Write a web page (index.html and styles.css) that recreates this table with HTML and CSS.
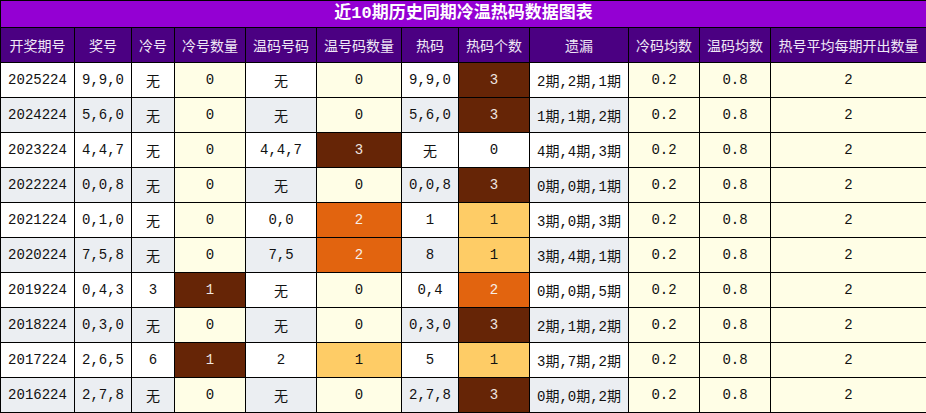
FILE: index.html
```html
<!DOCTYPE html>
<html lang="zh-CN">
<head>
<meta charset="utf-8">
<title>近10期历史同期冷温热码数据图表</title>
<link rel="stylesheet" href="styles.css">
</head>
<body>
<table class="chart">
  <colgroup>
    <col class="c1"><col class="c2"><col class="c3"><col class="c4"><col class="c5"><col class="c6">
    <col class="c7"><col class="c8"><col class="c9"><col class="c10"><col class="c11"><col class="c12">
  </colgroup>
  <thead>
    <tr><th colspan="12" class="title">近10期历史同期冷温热码数据图表</th></tr>
    <tr class="head">
      <th>开奖期号</th><th>奖号</th><th>冷号</th><th>冷号数量</th><th>温码号码</th><th>温号码数量</th>
      <th>热码</th><th>热码个数</th><th>遗漏</th><th>冷码均数</th><th>温码均数</th><th>热号平均每期开出数量</th>
    </tr>
  </thead>
  <tbody>
    <tr><td>2025224</td><td>9,9,0</td><td>无</td><td class="cr">0</td><td>无</td><td class="cr">0</td><td>9,9,0</td><td class="br">3</td><td>2期,2期,1期</td><td class="cr">0.2</td><td class="cr">0.8</td><td class="cr">2</td></tr>
    <tr class="alt"><td>2024224</td><td>5,6,0</td><td>无</td><td class="cr">0</td><td>无</td><td class="cr">0</td><td>5,6,0</td><td class="br">3</td><td>1期,1期,2期</td><td class="cr">0.2</td><td class="cr">0.8</td><td class="cr">2</td></tr>
    <tr><td>2023224</td><td>4,4,7</td><td>无</td><td class="cr">0</td><td>4,4,7</td><td class="br">3</td><td>无</td><td>0</td><td>4期,4期,3期</td><td class="cr">0.2</td><td class="cr">0.8</td><td class="cr">2</td></tr>
    <tr class="alt"><td>2022224</td><td>0,0,8</td><td>无</td><td class="cr">0</td><td>无</td><td class="cr">0</td><td>0,0,8</td><td class="br">3</td><td>0期,0期,1期</td><td class="cr">0.2</td><td class="cr">0.8</td><td class="cr">2</td></tr>
    <tr><td>2021224</td><td>0,1,0</td><td>无</td><td class="cr">0</td><td>0,0</td><td class="or">2</td><td>1</td><td class="lo">1</td><td>3期,0期,3期</td><td class="cr">0.2</td><td class="cr">0.8</td><td class="cr">2</td></tr>
    <tr class="alt"><td>2020224</td><td>7,5,8</td><td>无</td><td class="cr">0</td><td>7,5</td><td class="or">2</td><td>8</td><td class="lo">1</td><td>3期,4期,1期</td><td class="cr">0.2</td><td class="cr">0.8</td><td class="cr">2</td></tr>
    <tr><td>2019224</td><td>0,4,3</td><td>3</td><td class="br">1</td><td>无</td><td class="cr">0</td><td>0,4</td><td class="or">2</td><td>0期,0期,5期</td><td class="cr">0.2</td><td class="cr">0.8</td><td class="cr">2</td></tr>
    <tr class="alt"><td>2018224</td><td>0,3,0</td><td>无</td><td class="cr">0</td><td>无</td><td class="cr">0</td><td>0,3,0</td><td class="br">3</td><td>2期,1期,2期</td><td class="cr">0.2</td><td class="cr">0.8</td><td class="cr">2</td></tr>
    <tr><td>2017224</td><td>2,6,5</td><td>6</td><td class="br">1</td><td>2</td><td class="lo">1</td><td>5</td><td class="lo">1</td><td>3期,7期,2期</td><td class="cr">0.2</td><td class="cr">0.8</td><td class="cr">2</td></tr>
    <tr class="alt"><td>2016224</td><td>2,7,8</td><td>无</td><td class="cr">0</td><td>无</td><td class="cr">0</td><td>2,7,8</td><td class="br">3</td><td>0期,0期,2期</td><td class="cr">0.2</td><td class="cr">0.8</td><td class="cr">2</td></tr>
  </tbody>
</table>
</body>
</html>
```
FILE: styles.css
```css
html, body {
  margin: 0;
  padding: 0;
  background: #ffffff;
}
.chart {
  border-collapse: collapse;
  table-layout: fixed;
  width: 926px;
  font-family: "Liberation Mono", "Noto Sans CJK SC", monospace;
  font-size: 14px;
  color: #111111;
}
.c1 { width: 74px; }
.c2 { width: 57px; }
.c3 { width: 43px; }
.c4 { width: 71px; }
.c5 { width: 71px; }
.c6 { width: 85px; }
.c7 { width: 57px; }
.c8 { width: 71px; }
.c9 { width: 99px; }
.c10 { width: 71px; }
.c11 { width: 71px; }
.c12 { width: 156px; }
.chart th, .chart td {
  border: 1px solid #000000;
  padding: 0;
  text-align: center;
  white-space: nowrap;
  overflow: hidden;
}
.title {
  height: 26px;
  background: #9400d3;
  color: #ffffff;
  font-size: 17px;
  font-weight: bold;
  line-height: 26px;
}
.head th {
  height: 34px;
  background: #4b0082;
  color: #efe8f6;
  font-size: 14px;
  font-weight: normal;
}
.chart td {
  height: 34px;
  background: #ffffff;
}
.chart tr.alt td {
  background: #ebeef2;
}
.chart td.cr, .chart tr.alt td.cr {
  background: #fffee6;
}
.chart td.br, .chart tr.alt td.br {
  background: #662506;
  color: #f0e6e0;
}
.chart td.or, .chart tr.alt td.or {
  background: #e2640f;
  color: #f8efe8;
}
.chart td.lo, .chart tr.alt td.lo {
  background: #fecc66;
  color: #111111;
}
```
